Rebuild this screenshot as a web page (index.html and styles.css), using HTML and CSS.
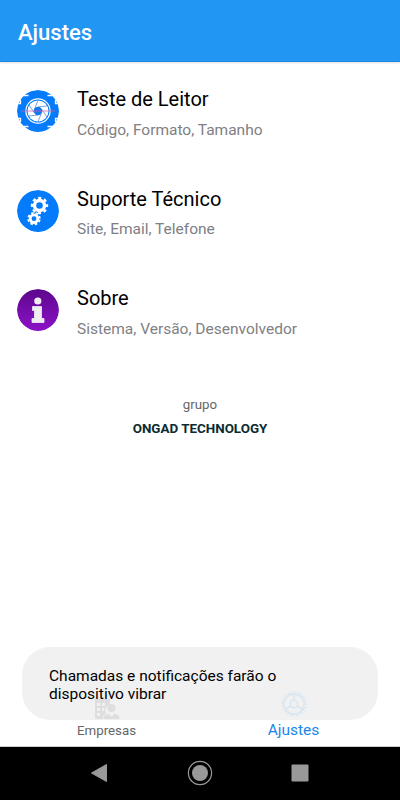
FILE: index.html
```html
<!DOCTYPE html>
<html lang="pt-BR">
<head>
<meta charset="utf-8">
<title>Ajustes</title>
<link rel="stylesheet" href="styles.css">
</head>
<body>
<div class="screen">
  <header class="appbar"><h1>Ajustes</h1></header>
  <main class="content">
    <section class="row">
      <svg class="row-icon" viewBox="0 0 42 42">
        <circle cx="21" cy="21" r="21" fill="#047bfb"/>
        <g fill="none" stroke="#fff">
          <path d="M6 5.500H11.500M30.500 5.500H36M6 36.500H11.500M30.500 36.500H36" stroke-width="1.300"/>
          <path d="M0 13.500H3.500V10M42 13.500H38.500V10M0 28.500H3.500V32M42 28.500H38.500V32" stroke-width="1.300"/>
          <circle cx="21" cy="21" r="12.100" stroke-width="1.200"/>
        </g>
        <circle cx="21" cy="21" r="10.500" fill="#fff"/>
        <path d="M21 17L30 16M24.500 19L30 27M24.500 23L21 31.500M21 25L12 26M17.500 23L12 15M17.500 19L21 10.500" fill="none" stroke="#3c80d8" stroke-width=".7"/>
        <circle cx="21" cy="21" r="4.200" fill="#1478ef"/>
        <path d="M4 21h34" stroke="#d45fae" stroke-opacity=".75" stroke-width="1.200"/>
      </svg>
      <div class="row-text"><h2>Teste de Leitor</h2><p>Código, Formato, Tamanho</p></div>
    </section>
    <section class="row">
      <svg class="row-icon" viewBox="0 0 42 42">
        <circle cx="21" cy="21" r="21" fill="#047bfb"/>
        <g fill="none" stroke="#fff">
          <circle cx="22.500" cy="15.500" r="5" stroke-width="3.400"/>
          <circle cx="22.500" cy="15.500" r="7.600" stroke-width="2.200" stroke-dasharray="3.200 2.769" stroke-dashoffset="1.600"/>
          <circle cx="17" cy="28.700" r="3.800" stroke-width="2.800"/>
          <circle cx="17" cy="28.700" r="5.800" stroke-width="1.800" stroke-dasharray="2.500 2.055" stroke-dashoffset="-1"/>
        </g>
      </svg>
      <div class="row-text"><h2>Suporte Técnico</h2><p class="raised">Site, Email, Telefone</p></div>
    </section>
    <section class="row">
      <svg class="row-icon" viewBox="0 0 42 42">
        <defs><linearGradient id="violet" x1="0" y1="0" x2="0" y2="1"><stop offset="0" stop-color="#5c078c"/><stop offset="1" stop-color="#8c12c8"/></linearGradient></defs>
        <circle cx="21" cy="21" r="21" fill="url(#violet)"/>
        <circle cx="20.800" cy="12" r="3.600" fill="#f0edf2"/>
        <path d="M15.500 17.500H24.500V29.500H27V33.500H15V29.500H17.500V21.500H15.500Z" fill="#f0edf2" stroke="#f0edf2" stroke-width=".8" stroke-linejoin="round"/>
      </svg>
      <div class="row-text"><h2>Sobre</h2><p>Sistema, Versão, Desenvolvedor</p></div>
    </section>
    <footer class="credit"><span>grupo</span><strong>ONGAD TECHNOLOGY</strong></footer>
  </main>
  <nav class="tabs">
    <div class="tab">
      <svg class="tab-icon" viewBox="0 0 26 26">
        <path fill="#555" fill-rule="evenodd" d="M1 3h15v6a5 5 0 0 0-4 8l-3 3v3H1ZM3 7v3h3V7ZM8 7v3h3V7ZM3 12v3h3v-3ZM8 12v3h2v-3ZM3 17v3h3v-3Z"/>
        <circle cx="17.500" cy="12" r="4" fill="#555"/>
        <path fill="#555" d="M9.500 23c0-3.500 2-5 5-5l3 2.500 3-2.500c3 0 5 1.500 5 5Z"/>
      </svg>
      <span>Empresas</span>
    </div>
    <div class="tab active">
      <svg class="tab-icon" viewBox="0 0 26 26" fill="none" stroke="#2196f3">
        <circle cx="13" cy="13" r="10.100" stroke-width="1.500"/>
        <circle cx="13" cy="13" r="11.900" stroke-width="2" stroke-dasharray="1.200 1.916"/>
        <circle cx="13" cy="13" r="3.700" stroke-width="1.500"/>
        <path d="M13 3v6.500M9.900 15L4.500 18M16.100 15l5.400 3" stroke-width="1.500"/>
      </svg>
      <span>Ajustes</span>
    </div>
  </nav>
  <div class="systembar">
    <svg viewBox="0 0 26 26"><path d="M4.500 13L19.500 4.500V21.500Z" fill="#999" stroke="#999" stroke-width="1" stroke-linejoin="round"/></svg>
    <svg viewBox="0 0 26 26"><circle cx="13" cy="13" r="11.600" fill="none" stroke="#999" stroke-width="1.200"/><circle cx="13" cy="13" r="8" fill="#999"/></svg>
    <svg viewBox="0 0 26 26"><rect x="4.500" y="4.500" width="17" height="17" rx="1" fill="#999"/></svg>
  </div>
  <div class="toast">Chamadas e notificações farão o<br>dispositivo vibrar</div>
</div>
</body>
</html>
```
FILE: styles.css
```css
* { box-sizing: border-box; }
body { margin: 0; font-family: Roboto, "Liberation Sans", sans-serif; background: #fff; }
h1, h2, p { margin: 0; font-weight: 400; }
.screen { position: relative; display: flex; flex-direction: column; width: 400px; height: 800px; overflow: hidden; }
.appbar { height: 62px; padding: 20px 18px 0; background: #2196f3; border-bottom: 1px solid #1c87e5; box-shadow: 0 1px 2px #0002; color: #fff; }
.appbar h1 { font-size: 22px; line-height: 26px; font-weight: 500; }
.content { flex: 1; padding-top: 28px; }
.row { display: flex; gap: 18px; height: 99.5px; padding-left: 17px; }
.row-icon { width: 42px; height: 42px; flex: none; overflow: hidden; border-radius: 50%; }
.row-text { margin-top: -3px; white-space: nowrap; }
.row h2 { font-size: 20px; line-height: 24px; color: #000; }
.row p { margin-top: 10px; font-size: 15.5px; line-height: 18px; color: #808084; }
.row p.raised { margin-top: 9px; }
.credit { display: flex; flex-direction: column; align-items: center; padding-top: 8px; font-size: 13.3px; line-height: 16px; color: #666; }
.credit strong { margin-top: 8px; font-size: 13.4px; font-weight: 700; color: #0b2b30; }
.tabs { display: flex; height: 56px; border-bottom: 1px solid #ccc; padding: 0 13px; }
.tab { flex: 1; display: flex; flex-direction: column; align-items: center; font-size: 13.3px; line-height: 16px; color: #666; }
.tab-icon { width: 26px; height: 26px; margin: 5px 0 1px; }
.active { color: #2185ea; font-size: 15.5px; }
.active .tab-icon { margin: 0 0 5px; }
.systembar { display: flex; justify-content: center; align-items: center; gap: 74px; height: 53px; background: #000; }
.systembar svg { width: 26px; height: 26px; margin-top: -1px; }
.toast { position: absolute; left: 22px; top: 647px; width: 356px; height: 73px; padding: 20px 27px; border-radius: 28px; background: rgba(239, 239, 239, .89); font-size: 15.5px; line-height: 18px; color: #000; white-space: nowrap; }
```
